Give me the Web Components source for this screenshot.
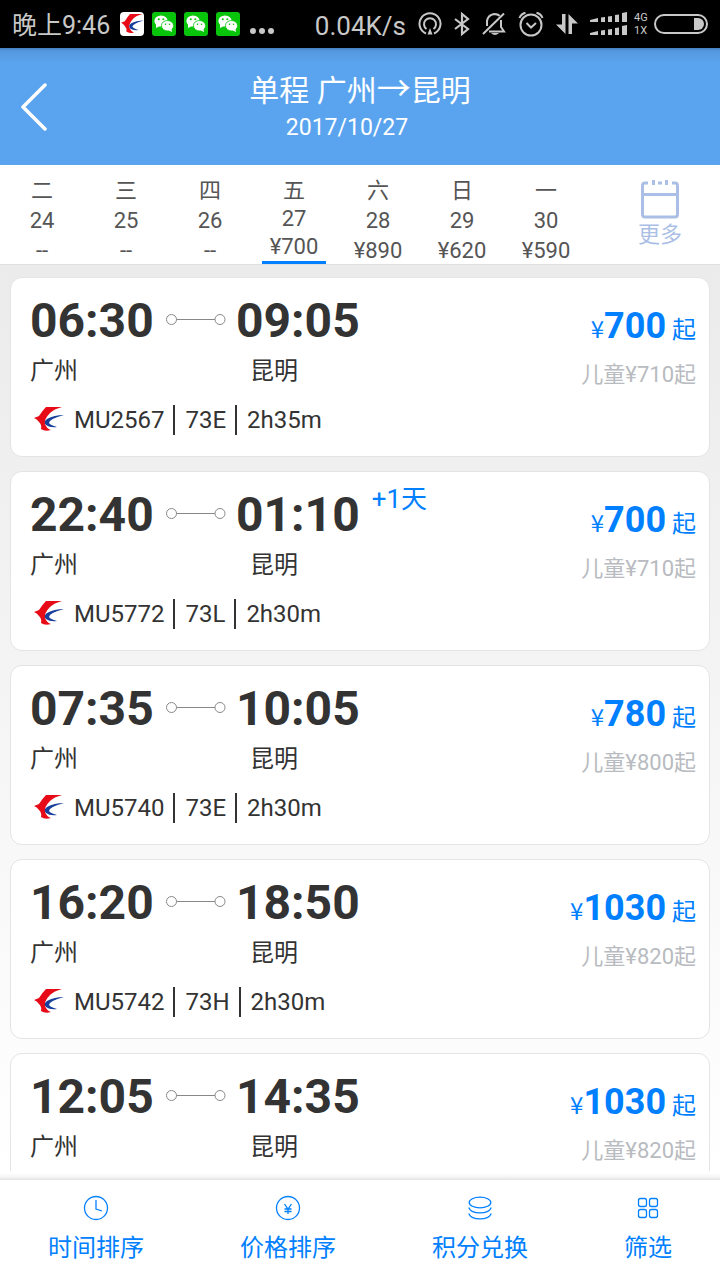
<!DOCTYPE html>
<html lang="zh-CN">
<head>
<meta charset="utf-8">
<meta name="viewport" content="width=device-width, initial-scale=1">
<title>单程 广州→昆明</title>
<style>
  body { margin: 0; font-family: Roboto, "Noto Sans CJK SC", sans-serif; color: #333; background: #fff; }
</style>
</head>
<body>
<flight-app></flight-app>

<script>
const base = `
  * { box-sizing: border-box; }
  button { font: inherit; color: inherit; background: none; border: 0; padding: 0; margin: 0; cursor: pointer; }
  svg { display: block; flex: none; }
`;

function define(name, markup) {
  customElements.define(name, class extends HTMLElement {
    constructor() {
      super();
      this.attachShadow({ mode: 'open' });
    }
    connectedCallback() {
      const body = typeof markup === 'function' ? markup(this) : markup;
      const template = document.createElement('template');
      template.innerHTML = `<style>${base}</style>${body}`;
      this.shadowRoot.replaceChildren(template.content.cloneNode(true));
    }
  });
}

const bird = `
  <path fill="#e60b17" d="M0 11 L5 9 Q8 4 12 0 L28 0 Q20 2 16 6 Q10 12 11 17 Q13 22 17 23 Q11 25 7 22 Q8 18 5 15 Q3 12 0 11Z"/>
  <path fill="#173f9b" d="M30 8 Q20 8 13 12 Q9 15 12 18 Q16 21 23 20 Q16 18 15 16 Q15 12 30 8Z"/>`;

define('airline-logo', `
  <style>:host { display: block; width: 30px; height: 26px; }</style>
  <svg width="30" height="26" viewBox="0 0 30 26" aria-hidden="true">${bird}</svg>`);

define('chat-icon', `
  <style>:host { display: block; }</style>
  <svg width="24" height="24" viewBox="0 0 24 24" aria-hidden="true">
    <rect width="24" height="24" rx="3" fill="#08c40a"/>
    <ellipse cx="9" cy="9" rx="6.6" ry="5.6" fill="#fff"/>
    <path d="M4 12 L4 16 L8 14Z" fill="#fff"/>
    <ellipse cx="15.5" cy="13.7" rx="6.1" ry="5.2" fill="#fff" stroke="#08c40a" stroke-width=".8"/>
    <path d="M16 18 L20 20 L19.500 17Z" fill="#fff"/>
    <g fill="#08c40a"><circle cx="6.800" cy="7.300" r="1"/><circle cx="11.300" cy="7.300" r="1"/><circle cx="13.500" cy="12.300" r=".8"/><circle cx="17.500" cy="12.300" r=".8"/></g>
  </svg>`);

define('status-bar', `
  <style>
    :host { display: flex; align-items: center; justify-content: space-between; height: 48px; padding: 0 12px; background: #000; color: #c8c8c8; white-space: nowrap; }
    .left, .right { display: flex; align-items: center; }
    .left { gap: 8px; font-size: 25px; line-height: 48px; }
    .right { gap: 12px; }
    .speed { font-size: 26px; line-height: 48px; padding-top: 3px; }
    .cell { display: flex; align-items: center; gap: 6px; }
    .net { width: 14px; font-size: 11px; line-height: 13px; }
    .net span { display: block; }
    .clock { margin-right: 2px; padding-top: 3px; }
  </style>
  <div class="left">
    <span class="clock">晚上9:46</span>
    <svg width="24" height="24" viewBox="0 0 24 24" aria-hidden="true"><rect width="24" height="24" rx="4" fill="#fff"/><g transform="translate(1 2) scale(.76 .8)">${bird}</g></svg>
    <chat-icon></chat-icon><chat-icon></chat-icon><chat-icon></chat-icon>
    <svg width="28" height="24" viewBox="0 0 28 24" fill="currentColor" aria-hidden="true"><circle cx="5" cy="19" r="3"/><circle cx="14" cy="19" r="3"/><circle cx="23" cy="19" r="3"/></svg>
  </div>
  <div class="right">
    <span class="speed">0.04K/s</span>
    <svg width="24" height="24" viewBox="0 0 24 24" fill="none" stroke="currentColor" stroke-width="2" aria-hidden="true"><path d="M8 21.500 A10.500 10.500 0 1 1 16 21.500"/><path d="M8.500 17 A6 6 0 1 1 15.500 17"/><path d="M12 16 L14.500 22.500 H9.500Z" fill="currentColor" stroke="none"/></svg>
    <svg width="16" height="24" viewBox="0 0 16 24" fill="none" stroke="currentColor" stroke-width="2.200" aria-hidden="true"><path d="M1 7 L14 17 L8 22 V2 L14 7 L1 17"/></svg>
    <svg width="24" height="24" viewBox="0 0 24 24" fill="none" stroke="currentColor" stroke-width="2" aria-hidden="true"><path d="M5 14 V9 Q6 3 12 2 Q16 2 17.500 4 M19 8 V15 L22 19.500 H7 M1 22 L22 1.500"/><path d="M9 21 H17 Q13 25 9 21Z" fill="currentColor" stroke="none"/></svg>
    <svg width="26" height="26" viewBox="0 0 26 26" fill="none" stroke="currentColor" stroke-width="2" aria-hidden="true"><circle cx="13" cy="14" r="10.500"/><path d="M8.500 12 L13 16.500 L18 12 M1.500 7 Q3 3 7.500 1.800 M24.500 7 Q23 3 18.500 1.800"/></svg>
    <svg width="22" height="22" viewBox="0 0 22 22" fill="currentColor" aria-hidden="true"><path d="M6 1 H9.500 V21 L0 11.500 H6Z"/><path d="M12.500 21 H16 V10.500 H22 L12.500 1Z"/></svg>
    <div class="cell">
      <svg width="38" height="24" viewBox="0 0 38 24" fill="currentColor" aria-hidden="true">
        <path d="M0 8 L8 6 V10 H0Z M11 5.500 L15 5 V10 H11Z M18 4.500 L22 4 V10 H18Z M25 3 L29 2.500 V10 H25Z M32 1 L37 0 V10 H32Z"/>
        <path d="M0 21 L8 19 V23 H0Z M11 18.500 L15 18 V23 H11Z M18 17.500 L22 17 V23 H18Z M25 16 L29 15.500 V23 H25Z M32 14 L37 13 V23 H32Z"/>
      </svg>
      <div class="net"><span>4G</span><span>1X</span></div>
      <svg width="54" height="20" viewBox="0 0 54 20" aria-hidden="true"><rect x="1" y="1" width="52" height="18" rx="9" fill="none" stroke="currentColor" stroke-width="2"/><path d="M40 4 H44 A6 6 0 0 1 44 16 H40Z" fill="currentColor"/></svg>
    </div>
  </div>`);

define('route-header', `
  <style>
    :host { display: grid; grid-template-columns: 72px 1fr 72px; align-items: center; height: 117px; color: #fff; background: linear-gradient(#4680bf 0, #5598df 3px, #5aa4ef 16px); }
    button { height: 72px; padding-left: 20px; }
    .title { text-align: center; padding-top: 2px; }
    h1 { margin: 0; font-size: 30px; line-height: 40px; font-weight: 400; }
    h1 span { font-family: "Noto Sans CJK SC", sans-serif; font-size: 34px; line-height: 0; }
    time { display: block; font-size: 23px; line-height: 34px; padding-right: 26px; }
  </style>
  <button aria-label="返回"><svg width="28" height="48" viewBox="0 0 28 48" fill="none" stroke="#fff" stroke-width="3.500" stroke-linecap="round" stroke-linejoin="round"><path d="M25 2 L3 24 L25 46"/></svg></button>
  <div class="title"><h1>单程 广州<span>→</span>昆明</h1><time datetime="2017-10-27">2017/10/27</time></div>`);

define('date-cell', el => `
  <style>
    :host { display: block; color: #555; }
    button { display: flex; flex-direction: column; align-items: center; width: 100%; height: 99px; padding-top: 11px; font-size: 22px; line-height: 30px; }
    button[aria-pressed=true] { padding-top: 12px; line-height: 28px; }
    [aria-pressed=true] .fare { padding: 0 8px; border-bottom: 3px solid #0080ff; }
  </style>
  <button aria-pressed="${el.hasAttribute('selected')}">
    <span>${el.getAttribute('week')}</span><span>${el.getAttribute('day')}</span><span class="fare">${el.getAttribute('fare')}</span>
  </button>`);

define('date-strip', `
  <style>
    :host { display: grid; grid-template-columns: repeat(7, 7fr) 11fr; height: 100px; background: #fff; border-bottom: 1px solid #e0e0e0; }
    .more { color: #abbfe6; font-size: 22px; line-height: 30px; display: flex; flex-direction: column; align-items: center; padding: 14px 0 0 12px; }
  </style>
  <slot></slot>
  <button class="more">
    <svg width="40" height="41" viewBox="0 0 40 41" fill="none" stroke="currentColor" stroke-width="3" stroke-linejoin="round" aria-hidden="true"><path d="M8 4 H5 Q2.500 4 2.500 6.500 V35.500 Q2.500 38 5 38 H35 Q37.500 38 37.500 35.500 V6.500 Q37.500 4 35 4 H32 M2.500 15.500 H37.500 M18 4 H22 M13.500 1 V6 M26.500 1 V6"/></svg>
    更多
  </button>`);

define('flight-card', el => {
  const a = name => el.getAttribute(name);
  return `
  <style>
    :host { display: flex; justify-content: space-between; flex: none; height: 180px; padding: 18px 13px 0 19px; background: #fff; border: 1px solid #e4e4e4; border-radius: 12px; color: #333; white-space: nowrap; box-sizing: border-box; }
    .times { display: grid; grid-template-columns: 126px 60px auto; column-gap: 10px; }
    .time { font-size: 48px; line-height: 50px; font-weight: 700; }
    .line { padding-top: 18px; }
    .arrive { display: flex; gap: 12px; }
    .plus { font-size: 26px; line-height: 18px; color: #0080ff; }
    .city { font-size: 24px; line-height: 50px; grid-column: 1 / 3; }
    .city.to { grid-column: 3; padding-left: 14px; }
    .info { display: flex; align-items: center; height: 48px; padding-left: 4px; font-size: 24px; line-height: 30px; }
    airline-logo { margin-right: 10px; }
    .info span + span { margin-left: 9px; padding-left: 10px; border-left: 2px solid #333; }
    .price { text-align: right; color: #0080ff; font-size: 24px; line-height: 50px; padding-top: 5px; }
    .sum b { font-size: 36px; }
    .yen { font-family: "Noto Sans CJK SC", sans-serif; }
    .child { color: #b8bbc0; font-size: 22px; line-height: 40px; }
  </style>
  <div>
    <div class="times">
      <span class="time">${a('depart')}</span>
      <svg class="line" width="60" height="29" viewBox="0 0 60 11" fill="none" stroke="#888" aria-hidden="true"><circle cx="5.500" cy="5.500" r="5"/><circle cx="54" cy="5.500" r="5"/><path d="M10.500 5.500 H49"/></svg>
      <span class="arrive"><span class="time">${a('arrive')}</span>${a('plus') ? `<span class="plus">${a('plus')}</span>` : ''}</span>
      <span class="city">广州</span><span class="city to">昆明</span>
    </div>
    ${a('flight') ? `<div class="info"><airline-logo></airline-logo><span>${a('flight')}</span><span>${a('plane')}</span><span>${a('duration')}</span></div>` : ''}
  </div>
  <div class="price">
    <div class="sum"><span class="yen">¥</span><b>${a('price')}</b> 起</div>
    <div class="child">儿童¥${a('child')}起</div>
  </div>`;
});

define('flight-list', `
  <style>
    :host { display: flex; flex-direction: column; gap: 14px; flex: 1; min-height: 0; overflow-y: auto; scrollbar-width: none; padding: 12px 10px; background: linear-gradient(#ebebeb, #fff); box-sizing: border-box; }
  </style>
  <slot></slot>`);

define('sort-tab', `
  <style>
    :host { display: block; flex: 4; color: #0080ff; }
    :host([narrow]) { flex: 3; }
    button { display: flex; flex-direction: column; align-items: center; gap: 8px; width: 100%; padding-top: 15px; font-size: 24px; line-height: 38px; }
    ::slotted(svg) { display: block; }
  </style>
  <button><slot name="icon"></slot><slot></slot></button>`);

define('sort-bar', `
  <style>
    :host { display: block; flex: none; }
    .shade { height: 9px; background: linear-gradient(#fff 20%, #f7f7f7 60%, #e4e4e4); }
    nav { display: flex; height: 100px; background: #fff; }
  </style>
  <div class="shade"></div>
  <nav>
    <sort-tab><svg slot="icon" width="26" height="26" viewBox="0 0 26 26" fill="none" stroke="currentColor" stroke-width="1.300" aria-hidden="true"><circle cx="13" cy="13" r="11.500"/><path d="M13 5 V14 L19 16"/></svg>时间排序</sort-tab>
    <sort-tab><svg slot="icon" width="26" height="26" viewBox="0 0 26 26" fill="none" stroke="currentColor" stroke-width="1.300" aria-hidden="true"><circle cx="13" cy="13" r="11.500"/><path d="M9.500 9 L13 14 L16.500 9 M13 14 V19 M9.500 14 H16.500 M9.500 16.500 H16.500"/></svg>价格排序</sort-tab>
    <sort-tab><svg slot="icon" width="26" height="26" viewBox="0 0 26 26" fill="none" stroke="currentColor" stroke-width="1.300" aria-hidden="true"><ellipse cx="13" cy="7.500" rx="10.800" ry="5.300"/><path d="M2 12.500 C3 19.700 23 19.700 24 12.500 M2 18.500 C3 25.700 23 25.700 24 18.500"/></svg>积分兑换</sort-tab>
    <sort-tab narrow><svg slot="icon" width="26" height="26" viewBox="0 0 26 26" fill="none" stroke="currentColor" stroke-width="1.300" aria-hidden="true"><rect x="3.500" y="3.500" width="8" height="8" rx="2"/><rect x="14.500" y="3.500" width="8" height="8" rx="2"/><rect x="3.500" y="14.500" width="8" height="8" rx="2"/><rect x="14.500" y="14.500" width="8" height="8" rx="2"/></svg>筛选</sort-tab>
  </nav>`);

define('flight-app', `
  <style>:host { display: flex; flex-direction: column; height: 100vh; }
    status-bar, route-header, date-strip { flex: none; box-sizing: border-box; }
  </style>
  <status-bar></status-bar>
  <route-header></route-header>
  <date-strip>
    <date-cell week="二" day="24" fare="--"></date-cell>
    <date-cell week="三" day="25" fare="--"></date-cell>
    <date-cell week="四" day="26" fare="--"></date-cell>
    <date-cell week="五" day="27" fare="¥700" selected></date-cell>
    <date-cell week="六" day="28" fare="¥890"></date-cell>
    <date-cell week="日" day="29" fare="¥620"></date-cell>
    <date-cell week="一" day="30" fare="¥590"></date-cell>
  </date-strip>
  <flight-list>
    <flight-card depart="06:30" arrive="09:05" flight="MU2567" plane="73E" duration="2h35m" price="700" child="710"></flight-card>
    <flight-card depart="22:40" arrive="01:10" plus="+1天" flight="MU5772" plane="73L" duration="2h30m" price="700" child="710"></flight-card>
    <flight-card depart="07:35" arrive="10:05" flight="MU5740" plane="73E" duration="2h30m" price="780" child="800"></flight-card>
    <flight-card depart="16:20" arrive="18:50" flight="MU5742" plane="73H" duration="2h30m" price="1030" child="820"></flight-card>
    <flight-card depart="12:05" arrive="14:35" price="1030" child="820"></flight-card>
  </flight-list>
  <sort-bar></sort-bar>`);
</script>
</body>
</html>
